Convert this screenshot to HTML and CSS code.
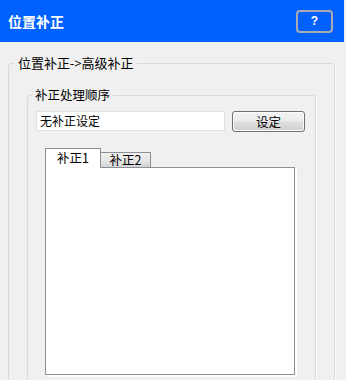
FILE: index.html
```html
<!DOCTYPE html>
<html lang="zh-CN">
<head>
<meta charset="utf-8">
<title>位置补正</title>
<link rel="stylesheet" href="styles.css">
</head>
<body>
<div class="titlebar">
  <span class="title">位置补正</span>
  <button class="help" type="button">?</button>
</div>
<main class="content">
  <fieldset class="group outer">
    <legend class="outer-legend">位置补正-&gt;高级补正</legend>
    <fieldset class="group inner">
      <legend class="inner-legend">补正处理顺序</legend>
      <div class="row">
        <div class="field">无补正设定</div>
        <button class="btn" type="button">设定</button>
      </div>
      <div class="tabs">
        <div class="tabstrip">
          <div class="tab active">补正1</div>
          <div class="tab">补正2</div>
        </div>
        <div class="panel"></div>
      </div>
    </fieldset>
  </fieldset>
</main>
</body>
</html>
```

FILE: styles.css
```css
html, body {
  margin: 0;
  padding: 0;
  overflow: hidden;
}
body {
  width: 346px;
  height: 380px;
  background: #f0f0f0;
  font-family: "Noto Sans CJK SC", "Noto Sans", sans-serif;
  color: #000;
}
.content {
  height: 338px;
  overflow: hidden;
}
.titlebar {
  width: 344px;
  height: 42px;
  box-sizing: border-box;
  background: #0061fe;
  display: flex;
  align-items: center;
  justify-content: space-between;
  padding: 0 11px 0 8px;
}
.title {
  color: #fff;
  font-weight: bold;
  font-size: 14px;
  line-height: 14px;
}
.help {
  width: 37px;
  height: 23px;
  box-sizing: border-box;
  border: 2px solid #a9aab3;
  border-radius: 4px;
  background: #0061fe;
  color: #fff;
  font-family: "Liberation Sans", sans-serif;
  font-weight: bold;
  font-size: 12px;
  line-height: 19px;
  padding: 0;
}
.group {
  margin: 0;
  padding: 0;
  min-width: 0;
  box-sizing: border-box;
  border: 1px solid #d3dce5;
  border-radius: 3px;
  box-shadow: 1px 1px 0 #fbfcfd;
}
.outer {
  margin: 14px 0 0 8px;
  width: 327px;
  height: 340px;
}
.outer-legend {
  font-family: "Noto Sans", "Noto Sans CJK SC", sans-serif;
  font-size: 13px;
  line-height: 14px;
  padding: 0 3px 0 4px;
  margin-left: 5px;
}
.inner {
  margin: 18px 0 0 18px;
  width: 289px;
  height: 300px;
}
.inner-legend {
  font-size: 12.5px;
  line-height: 14px;
  padding: 0 3px;
  margin-left: 4px;
}
.row {
  display: flex;
  gap: 7px;
  margin-top: 9px;
  padding-left: 8px;
  align-items: flex-start;
}
.field {
  width: 189px;
  height: 20px;
  box-sizing: border-box;
  border: 1px solid #dce2e9;
  background: #fff;
  font-size: 12px;
  line-height: 18px;
  padding-left: 3px;
}
.btn {
  width: 73px;
  height: 21px;
  box-sizing: border-box;
  border: 1px solid #707070;
  border-radius: 3px;
  background: linear-gradient(#f3f3f3, #ececec 48%, #dedede 52%, #d1d1d1);
  box-shadow: inset 0 0 0 1px #fbfbfb;
  font-family: "Noto Sans CJK SC", sans-serif;
  font-size: 12.5px;
  line-height: 18px;
  padding: 0;
  color: #000;
}
.tabs {
  margin: 16px 0 0 17px;
}
.tabstrip {
  display: flex;
  align-items: flex-end;
}
.tab {
  box-sizing: border-box;
  border: 1px solid #8e8f96;
  border-bottom: none;
  font-size: 12.5px;
  line-height: 14px;
  text-align: center;
}
.tab.active {
  position: relative;
  z-index: 1;
  width: 56px;
  height: 20px;
  margin-bottom: -1px;
  padding-top: 2px;
  background: #fff;
}
.tab:not(.active) {
  width: 51px;
  height: 15px;
  margin-left: -1px;
  background: linear-gradient(#f1f1f1, #e4e4e4 60%, #d3d3d3);
}
.panel {
  width: 250px;
  height: 208px;
  box-sizing: border-box;
  border: 1px solid #8e8f96;
  background: #fff;
  box-shadow: 2px 2px 0 #fff;
}
```
